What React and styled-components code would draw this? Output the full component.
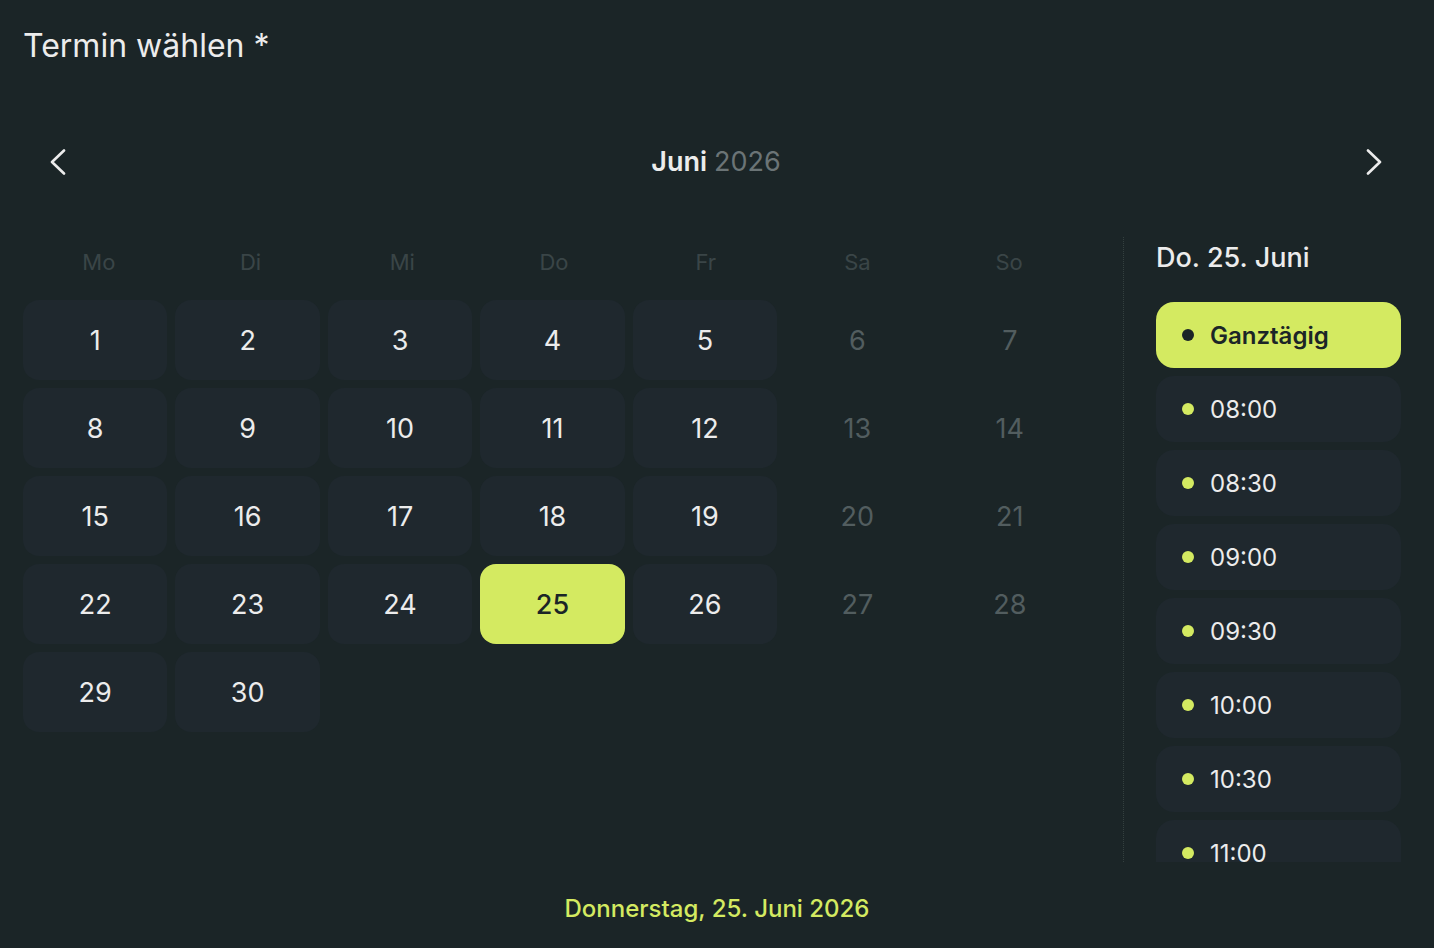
import React from 'react';
import styled, { createGlobalStyle } from 'styled-components';

const GlobalStyle = createGlobalStyle`
  html, body {
    margin: 0;
    padding: 0;
    background: #1b2527;
  }
  body {
    font-family: Inter, "Noto Sans", sans-serif;
    color: #ececec;
  }
`;

const weekdays = ['Mo', 'Di', 'Mi', 'Do', 'Fr', 'Sa', 'So'];
const slots = ['Ganztägig', '08:00', '08:30', '09:00', '09:30', '10:00', '10:30', '11:00'];
const selectedDay = 25;

const Page = styled.div`
  width: 1434px;
  height: 948px;
  box-sizing: border-box;
  padding: 0 23px;
  display: flex;
  flex-direction: column;
`;

const Title = styled.h1`
  margin: 28px 0 0;
  font-size: 32px;
  line-height: 36px;
  font-weight: 400;
  color: #ececec;
`;

const NavRow = styled.div`
  margin-top: 73px;
  height: 50px;
  display: flex;
  align-items: center;
  justify-content: space-between;
`;

const NavButton = styled.button`
  width: 44px;
  height: 44px;
  border: none;
  background: transparent;
  padding: 0;
  display: flex;
  align-items: center;
  justify-content: center;
  cursor: pointer;
  margin: ${(p) => (p.$side === 'left' ? '0 0 0 13px' : '0 15px 0 0')};
`;

const MonthLabel = styled.div`
  font-size: 27px;
  line-height: 36px;
  font-weight: 600;
  color: #ececec;

  span {
    font-weight: 400;
    color: #6b7476;
  }
`;

const Main = styled.div`
  margin-top: 50px;
  height: 625px;
  display: flex;
`;

const CalendarCol = styled.div`
  width: 1059px;
  margin-right: 41px;
`;

const WeekdayRow = styled.div`
  display: grid;
  grid-template-columns: repeat(7, 1fr);
  width: 1062px;
  height: 50px;
  margin-bottom: 13px;
`;

const Weekday = styled.div`
  display: flex;
  align-items: center;
  justify-content: center;
  font-size: 22px;
  color: #3a4547;
`;

const DayGrid = styled.div`
  display: grid;
  grid-template-columns: repeat(7, 1fr);
  grid-auto-rows: 80px;
  gap: 8px;
`;

const Day = styled.button`
  border: none;
  border-radius: 16px;
  font-family: inherit;
  font-size: 27px;
  font-weight: ${(p) => (p.$selected ? 500 : 400)};
  display: flex;
  align-items: center;
  justify-content: center;
  background: ${(p) => (p.$selected ? '#d4ea61' : p.$weekend ? 'transparent' : '#1f282e')};
  color: ${(p) => (p.$selected ? '#1b2527' : p.$weekend ? '#525d5f' : '#ececec')};
  cursor: ${(p) => (p.$weekend ? 'default' : 'pointer')};
`;

const Sidebar = styled.div`
  flex: 1;
  min-width: 0;
  border-left: 1px dotted #34403f;
  padding: 0 10px 0 32px;
  display: flex;
  flex-direction: column;
`;

const SideHeading = styled.div`
  font-size: 27px;
  line-height: 42px;
  font-weight: 500;
  color: #ececec;
  margin-bottom: 23px;
`;

const SlotList = styled.div`
  flex: 1;
  min-height: 0;
  overflow: hidden;
  display: flex;
  flex-direction: column;
  gap: 8px;
`;

const Slot = styled.button`
  flex: none;
  height: 66px;
  border: none;
  border-radius: 18px;
  padding: 0 0 0 26px;
  display: flex;
  align-items: center;
  gap: 16px;
  font-family: inherit;
  font-size: 24px;
  font-weight: ${(p) => (p.$active ? 600 : 400)};
  background: ${(p) => (p.$active ? '#d4ea61' : '#1f282e')};
  color: ${(p) => (p.$active ? '#1b2527' : '#ececec')};
  cursor: pointer;
`;

const Dot = styled.span`
  width: 12px;
  height: 12px;
  border-radius: 50%;
  background: ${(p) => (p.$active ? '#1b2527' : '#d4ea61')};
`;

const Footer = styled.div`
  margin-top: 29px;
  text-align: center;
  font-size: 24px;
  line-height: 36px;
  font-weight: 500;
  color: #d4ea61;
`;

const Chevron = ({ dir }) => (
  <svg width="16" height="26" viewBox="0 0 16 26" fill="none">
    <polyline
      points={dir === 'left' ? '14,1.5 2,13 14,24.5' : '2,1.5 14,13 2,24.5'}
      stroke="#ececec"
      strokeWidth="2.6"
      strokeLinecap="round"
      strokeLinejoin="round"
    />
  </svg>
);

const App = () => {
  const days = Array.from({ length: 30 }, (_, i) => i + 1);

  return (
    <Page>
      <GlobalStyle />
      <Title>Termin wählen *</Title>

      <NavRow>
        <NavButton $side="left" aria-label="Vorheriger Monat">
          <Chevron dir="left" />
        </NavButton>
        <MonthLabel>
          Juni <span>2026</span>
        </MonthLabel>
        <NavButton $side="right" aria-label="Nächster Monat">
          <Chevron dir="right" />
        </NavButton>
      </NavRow>

      <Main>
        <CalendarCol>
          <WeekdayRow>
            {weekdays.map((w) => (
              <Weekday key={w}>{w}</Weekday>
            ))}
          </WeekdayRow>
          <DayGrid>
            {days.map((d) => {
              const weekend = (d - 1) % 7 >= 5;
              return (
                <Day key={d} $weekend={weekend} $selected={d === selectedDay}>
                  {d}
                </Day>
              );
            })}
          </DayGrid>
        </CalendarCol>

        <Sidebar>
          <SideHeading>Do. 25. Juni</SideHeading>
          <SlotList>
            {slots.map((s, i) => (
              <Slot key={s} $active={i === 0}>
                <Dot $active={i === 0} />
                {s}
              </Slot>
            ))}
          </SlotList>
        </Sidebar>
      </Main>

      <Footer>Donnerstag, 25. Juni 2026</Footer>
    </Page>
  );
};

export default App;
